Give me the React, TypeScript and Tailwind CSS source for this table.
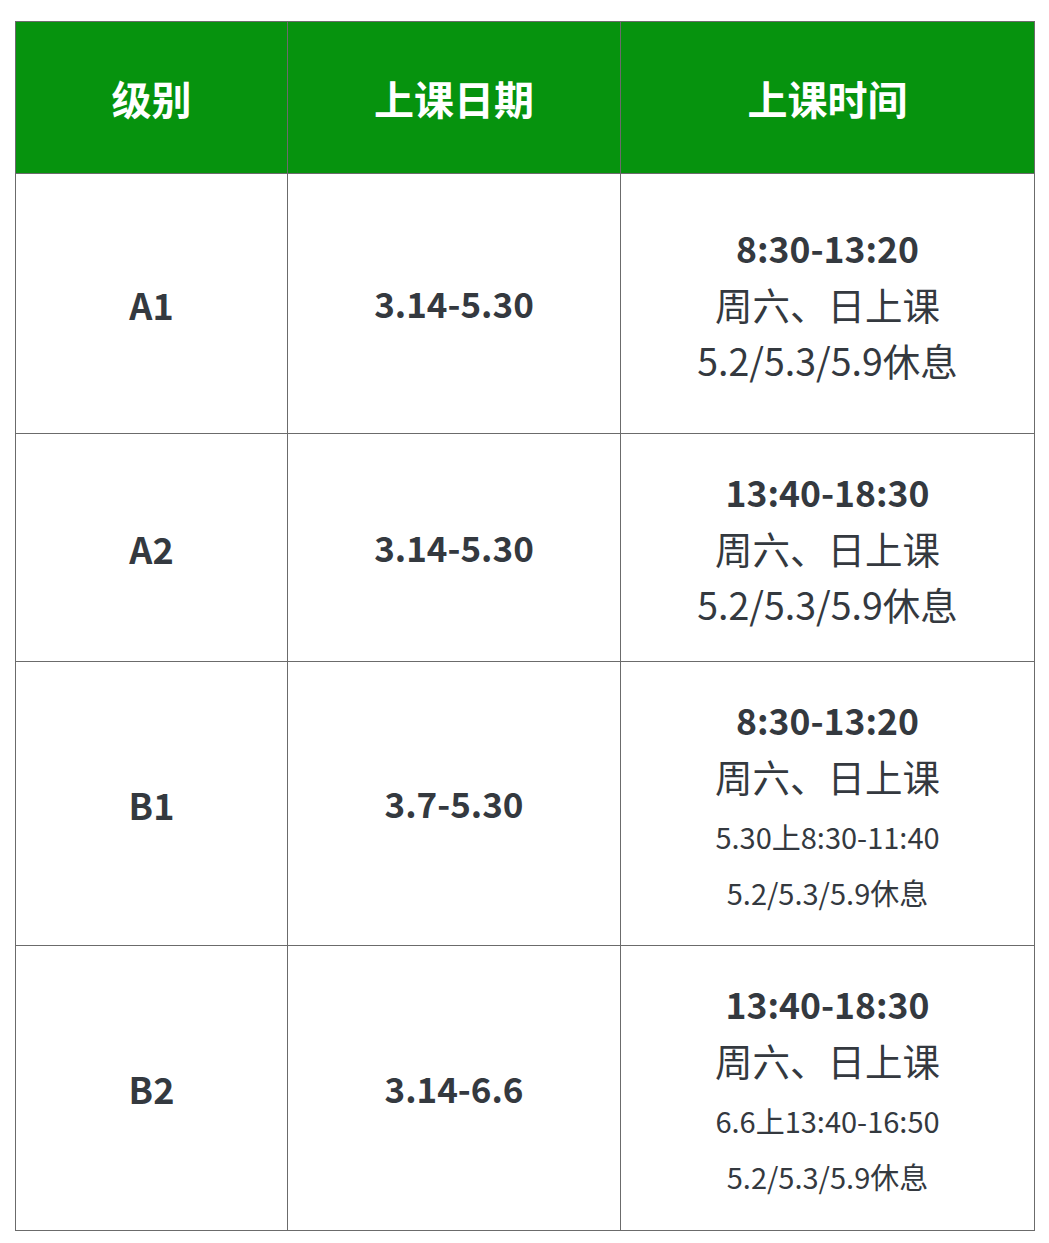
import React from "react";

type Row = {
  level: string;
  dates: string;
  time: string;
  days: string;
  notes: string[];
  small: boolean;
  h: string;
};

const rows: Row[] = [
  { level: "A1", dates: "3.14-5.30", time: "8:30-13:20", days: "周六、日上课", notes: ["5.2/5.3/5.9休息"], small: false, h: "h-[260px]" },
  { level: "A2", dates: "3.14-5.30", time: "13:40-18:30", days: "周六、日上课", notes: ["5.2/5.3/5.9休息"], small: false, h: "h-[228px]" },
  { level: "B1", dates: "3.7-5.30", time: "8:30-13:20", days: "周六、日上课", notes: ["5.30上8:30-11:40", "5.2/5.3/5.9休息"], small: true, h: "h-[284px]" },
  { level: "B2", dates: "3.14-6.6", time: "13:40-18:30", days: "周六、日上课", notes: ["6.6上13:40-16:50", "5.2/5.3/5.9休息"], small: true, h: "h-[285px]" },
];

const App = () => {
  return (
    <div
      className="min-h-screen bg-white pt-[21px] pl-[15px] text-[#34393f]"
      style={{ fontFamily: '"Noto Sans CJK SC", "Noto Sans", sans-serif' }}
    >
      <table className="w-[1019px] table-fixed border-collapse border border-[#6b6b6b]">
        <colgroup>
          <col className="w-[272px]" />
          <col className="w-[333px]" />
          <col className="w-[414px]" />
        </colgroup>
        <thead>
          <tr className="h-[152px] bg-[#06930e] text-white">
            <th className="border border-[#6b6b6b] text-[40px] font-bold">级别</th>
            <th className="border border-[#6b6b6b] text-[40px] font-bold">上课日期</th>
            <th className="border border-[#6b6b6b] text-[40px] font-bold">上课时间</th>
          </tr>
        </thead>
        <tbody>
          {rows.map((r) => (
            <tr key={r.level} className={r.h}>
              <td className="border border-[#6b6b6b] text-center text-[36px] font-bold">{r.level}</td>
              <td className="border border-[#6b6b6b] text-center text-[35px] font-bold">{r.dates}</td>
              <td className="border border-[#6b6b6b] text-center leading-[56px]">
                <div className="text-[35.5px] font-bold">{r.time}</div>
                <div className="text-[37.5px]">{r.days}</div>
                {r.notes.map((n) =>
                  r.small ? (
                    <div key={n} className="relative top-[4px] text-[29px]">
                      {n}
                    </div>
                  ) : (
                    <div key={n} className="text-[37.5px]">
                      {n}
                    </div>
                  )
                )}
              </td>
            </tr>
          ))}
        </tbody>
      </table>
    </div>
  );
};

export default App;
